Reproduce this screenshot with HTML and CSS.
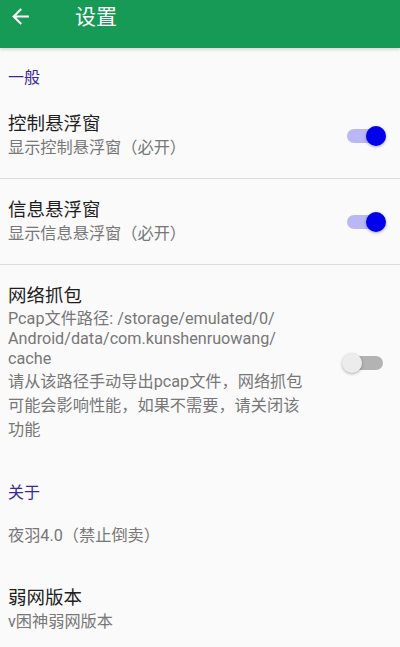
FILE: index.html
```html
<!DOCTYPE html>
<html lang="zh">
<head>
<meta charset="utf-8">
<link rel="stylesheet" href="styles.css">
</head>
<body>
<header class="appbar">
  <svg class="back" viewBox="0 0 24 24" width="25" height="25"><path d="M20 11H7.83l5.59-5.59L12 4l-8 8 8 8 1.41-1.41L7.83 13H20v-2z" fill="#fff"/></svg>
  <span class="appbar-title">设置</span>
</header>
<main class="list">
  <div class="category cat-first">一般</div>
  <div class="pref divided">
    <div class="pref-text">
      <div class="pref-title">控制悬浮窗</div>
      <div class="pref-summary">显示控制悬浮窗（必开）</div>
    </div>
    <div class="switch on"><span class="track"></span><span class="thumb"></span></div>
  </div>
  <div class="pref divided">
    <div class="pref-text">
      <div class="pref-title">信息悬浮窗</div>
      <div class="pref-summary">显示信息悬浮窗（必开）</div>
    </div>
    <div class="switch on"><span class="track"></span><span class="thumb"></span></div>
  </div>
  <div class="pref">
    <div class="pref-text">
      <div class="pref-title">网络抓包</div>
      <div class="pref-summary path">Pcap文件路径: /storage/emulated/0/<br>Android/data/com.kunshenruowang/<br>cache</div>
      <div class="pref-summary note">请从该路径手动导出pcap文件，网络抓包<br>可能会影响性能，如果不需要，请关闭该<br>功能</div>
    </div>
    <div class="switch off"><span class="track"></span><span class="thumb"></span></div>
  </div>
  <div class="category cat-about">关于</div>
  <div class="pref pref-info">
    <div class="pref-text">
      <div class="pref-summary">夜羽4.0（禁止倒卖）</div>
    </div>
  </div>
  <div class="pref">
    <div class="pref-text">
      <div class="pref-title">弱网版本</div>
      <div class="pref-summary">v困神弱网版本</div>
    </div>
  </div>
</main>
</body>
</html>
```
FILE: styles.css
```css
html, body {
  margin: 0;
  padding: 0;
}
body {
  width: 400px;
  height: 647px;
  overflow: hidden;
  background: #fafafa;
  font-family: Roboto, "Noto Sans CJK SC", sans-serif;
}
.appbar {
  height: 48px;
  background: #169a55;
  display: flex;
  align-items: flex-start;
  box-shadow: 0 2px 3px rgba(0,0,0,0.12);
  position: relative;
  z-index: 1;
}
.back {
  margin: 4px 0 0 8px;
  display: block;
}
.appbar-title {
  color: #fff;
  font-size: 21px;
  line-height: 28px;
  margin: 3px 0 0 42px;
}
.category {
  font-size: 16px;
  line-height: 20px;
  color: #3a26a0;
  padding: 0 8px;
}
.cat-first {
  padding-top: 20px;
  padding-bottom: 5px;
}
.cat-about {
  padding-top: 22px;
  padding-bottom: 5px;
}
.pref {
  display: flex;
  align-items: center;
  padding: 19px 14px 19px 8px;
}
.pref.divided {
  border-bottom: 1px solid #dcdcdc;
}
.pref-info {
  padding-top: 16px;
  padding-bottom: 20px;
}
.pref-text {
  flex: 1;
  min-width: 0;
}
.pref-title {
  font-size: 18.5px;
  line-height: 24px;
  color: #1e1e1e;
}
.pref-summary {
  font-size: 16.2px;
  line-height: 22px;
  color: #777;
  margin-top: 1px;
}
.pref-summary.path {
  line-height: 20px;
}
.pref-summary.note {
  line-height: 24px;
  margin-top: 1px;
}
.switch {
  position: relative;
  width: 44px;
  height: 24px;
  flex: none;
}
.track {
  position: absolute;
  left: 5px;
  right: 5px;
  top: 5px;
  height: 14px;
  border-radius: 7px;
}
.thumb {
  position: absolute;
  top: 2px;
  width: 20px;
  height: 20px;
  border-radius: 50%;
  box-shadow: 0 1px 3px rgba(0,0,0,0.3);
}
.switch.on .track { background: #b9b8f5; }
.switch.on .thumb { right: 0; background: #0000ea; box-shadow: 0 1px 3px rgba(0,0,120,0.35); }
.switch.off .track { background: #b3b3b3; left: 8px; right: 3px; }
.switch.off .thumb { left: 0; background: #ececec; }
```
